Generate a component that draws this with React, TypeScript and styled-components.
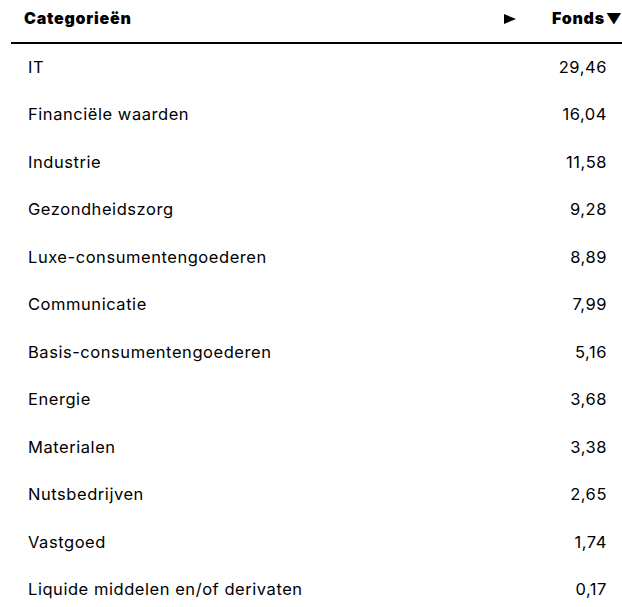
import React from "react";
import styled, { createGlobalStyle } from "styled-components";

const Global = createGlobalStyle`
  html, body { margin: 0; padding: 0; background: #fff; }
  body { font-family: Inter, "Noto Sans", Arial, sans-serif; color: #000; }
`;

const Table = styled.div`
  margin-left: 11px;
  width: 611px;
`;

const HeadRow = styled.div`
  display: flex;
  align-items: center;
  box-sizing: border-box;
  height: 44px;
  padding-left: 13px;
  padding-bottom: 6px;
  border-bottom: 2px solid #000;
`;

const HeadCell = styled.div<{ $grow?: boolean }>`
  font-size: 16px;
  font-weight: 900;
  letter-spacing: 0.75px;
  flex: ${(p) => (p.$grow ? 1 : "none")};
`;

const Arrow = styled.span`
  width: 0;
  height: 0;
  border-left: 12px solid #000;
  border-top: 5px solid transparent;
  border-bottom: 5px solid transparent;
  margin: 2px 36px 0 0;
`;

const Down = styled.span`
  font-size: 15px;
  margin-left: 1px;
  letter-spacing: 0;
`;

const Row = styled.div`
  display: flex;
  align-items: center;
  justify-content: space-between;
  box-sizing: border-box;
  height: 47.5px;
  padding: 0 15px 2px 17px;
  font-size: 16.5px;
  font-weight: 400;
  letter-spacing: 0.55px;
`;

const data: [string, string][] = [
  ["IT", "29,46"],
  ["Financiële waarden", "16,04"],
  ["Industrie", "11,58"],
  ["Gezondheidszorg", "9,28"],
  ["Luxe-consumentengoederen", "8,89"],
  ["Communicatie", "7,99"],
  ["Basis-consumentengoederen", "5,16"],
  ["Energie", "3,68"],
  ["Materialen", "3,38"],
  ["Nutsbedrijven", "2,65"],
  ["Vastgoed", "1,74"],
  ["Liquide middelen en/of derivaten", "0,17"],
];

export default function App() {
  return (
    <>
      <Global />
      <Table>
        <HeadRow>
          <HeadCell $grow>Categorieën</HeadCell>
          <Arrow />
          <HeadCell>
            Fonds<Down>▼</Down>
          </HeadCell>
        </HeadRow>
        {data.map(([k, v]) => (
          <Row key={k}>
            <span>{k}</span>
            <span>{v}</span>
          </Row>
        ))}
      </Table>
    </>
  );
}
